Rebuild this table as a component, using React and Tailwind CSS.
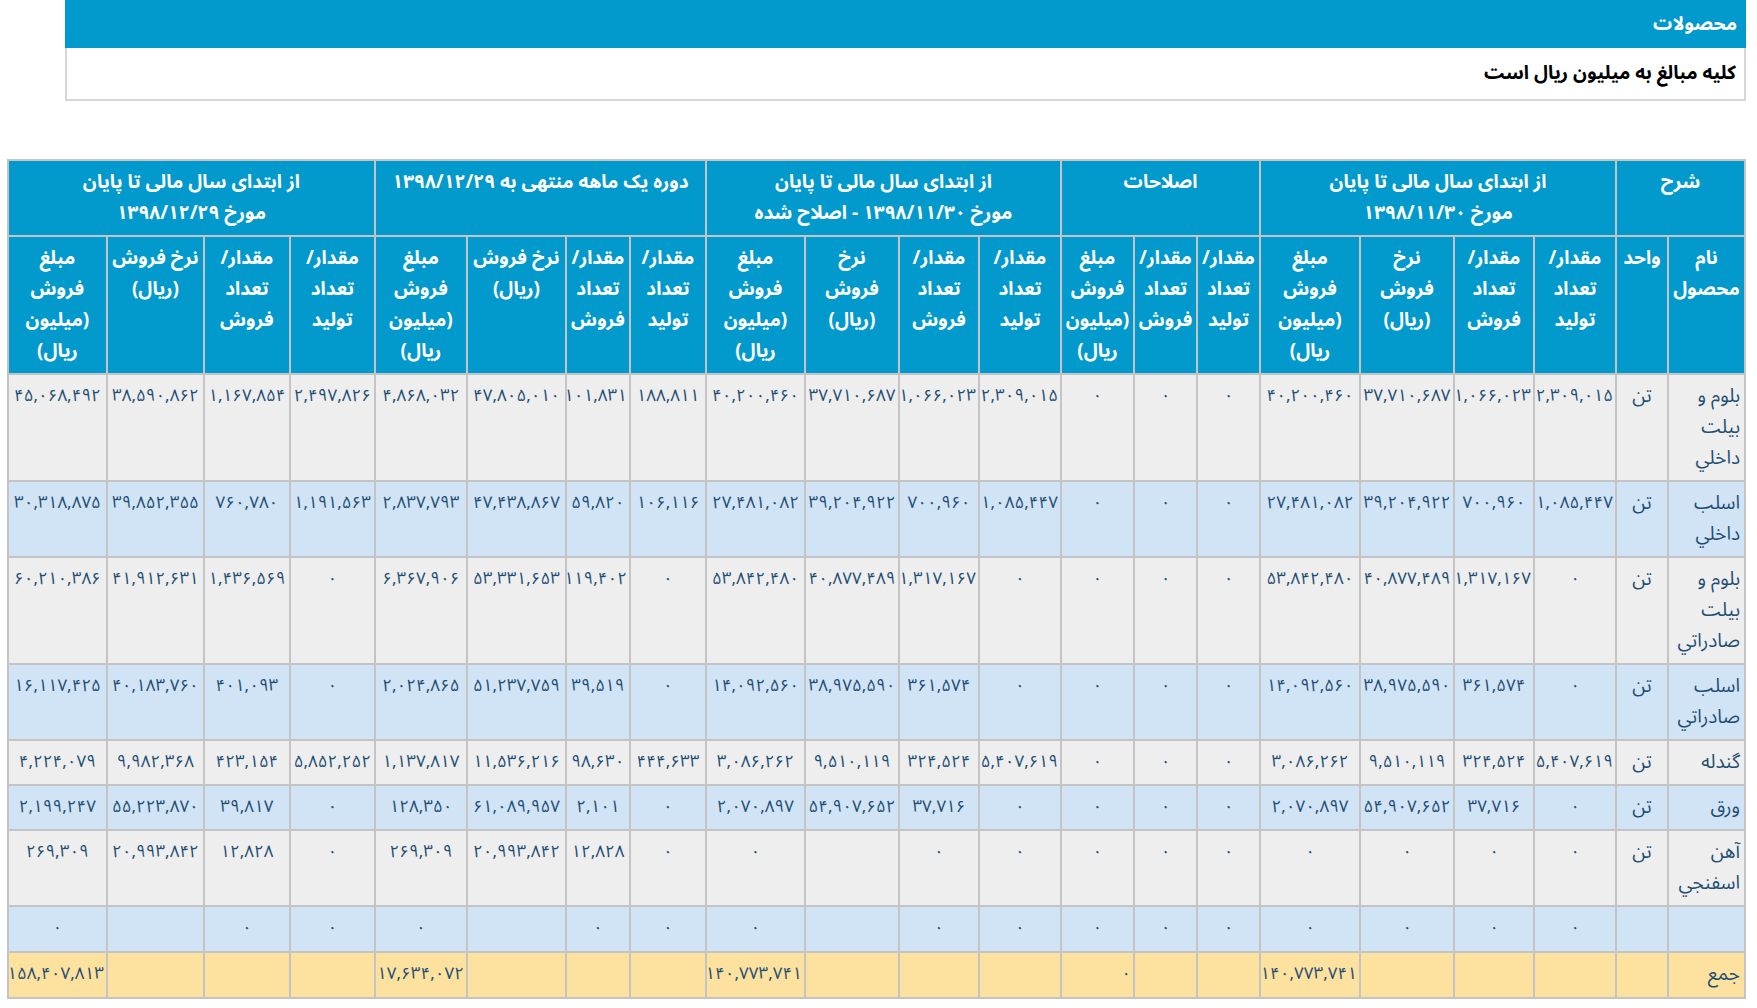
import React from "react";

const FONT = { fontFamily: '"Noto Sans Arabic", "DejaVu Sans", sans-serif' };

const widths = [77, 52, 82, 80, 94, 100, 63, 63, 73, 82, 80, 94, 99, 76, 64, 99, 92, 85, 86, 97, 99];

const Z = "۰";

const rows = [
  {
    name: ["بلوم و", "بیلت", "داخلي"],
    unit: "تن",
    bg: "bg-[#eeeeee]",
    v: ["۲,۳۰۹,۰۱۵", "۱,۰۶۶,۰۲۳", "۳۷,۷۱۰,۶۸۷", "۴۰,۲۰۰,۴۶۰", Z, Z, Z, "۲,۳۰۹,۰۱۵", "۱,۰۶۶,۰۲۳", "۳۷,۷۱۰,۶۸۷", "۴۰,۲۰۰,۴۶۰", "۱۸۸,۸۱۱", "۱۰۱,۸۳۱", "۴۷,۸۰۵,۰۱۰", "۴,۸۶۸,۰۳۲", "۲,۴۹۷,۸۲۶", "۱,۱۶۷,۸۵۴", "۳۸,۵۹۰,۸۶۲", "۴۵,۰۶۸,۴۹۲"],
  },
  {
    name: ["اسلب", "داخلي"],
    unit: "تن",
    bg: "bg-[#d1e4f5]",
    v: ["۱,۰۸۵,۴۴۷", "۷۰۰,۹۶۰", "۳۹,۲۰۴,۹۲۲", "۲۷,۴۸۱,۰۸۲", Z, Z, Z, "۱,۰۸۵,۴۴۷", "۷۰۰,۹۶۰", "۳۹,۲۰۴,۹۲۲", "۲۷,۴۸۱,۰۸۲", "۱۰۶,۱۱۶", "۵۹,۸۲۰", "۴۷,۴۳۸,۸۶۷", "۲,۸۳۷,۷۹۳", "۱,۱۹۱,۵۶۳", "۷۶۰,۷۸۰", "۳۹,۸۵۲,۳۵۵", "۳۰,۳۱۸,۸۷۵"],
  },
  {
    name: ["بلوم و", "بیلت", "صادراتي"],
    unit: "تن",
    bg: "bg-[#eeeeee]",
    v: [Z, "۱,۳۱۷,۱۶۷", "۴۰,۸۷۷,۴۸۹", "۵۳,۸۴۲,۴۸۰", Z, Z, Z, Z, "۱,۳۱۷,۱۶۷", "۴۰,۸۷۷,۴۸۹", "۵۳,۸۴۲,۴۸۰", Z, "۱۱۹,۴۰۲", "۵۳,۳۳۱,۶۵۳", "۶,۳۶۷,۹۰۶", Z, "۱,۴۳۶,۵۶۹", "۴۱,۹۱۲,۶۳۱", "۶۰,۲۱۰,۳۸۶"],
  },
  {
    name: ["اسلب", "صادراتي"],
    unit: "تن",
    bg: "bg-[#d1e4f5]",
    v: [Z, "۳۶۱,۵۷۴", "۳۸,۹۷۵,۵۹۰", "۱۴,۰۹۲,۵۶۰", Z, Z, Z, Z, "۳۶۱,۵۷۴", "۳۸,۹۷۵,۵۹۰", "۱۴,۰۹۲,۵۶۰", Z, "۳۹,۵۱۹", "۵۱,۲۳۷,۷۵۹", "۲,۰۲۴,۸۶۵", Z, "۴۰۱,۰۹۳", "۴۰,۱۸۳,۷۶۰", "۱۶,۱۱۷,۴۲۵"],
  },
  {
    name: ["گندله"],
    unit: "تن",
    bg: "bg-[#eeeeee]",
    v: ["۵,۴۰۷,۶۱۹", "۳۲۴,۵۲۴", "۹,۵۱۰,۱۱۹", "۳,۰۸۶,۲۶۲", Z, Z, Z, "۵,۴۰۷,۶۱۹", "۳۲۴,۵۲۴", "۹,۵۱۰,۱۱۹", "۳,۰۸۶,۲۶۲", "۴۴۴,۶۳۳", "۹۸,۶۳۰", "۱۱,۵۳۶,۲۱۶", "۱,۱۳۷,۸۱۷", "۵,۸۵۲,۲۵۲", "۴۲۳,۱۵۴", "۹,۹۸۲,۳۶۸", "۴,۲۲۴,۰۷۹"],
  },
  {
    name: ["ورق"],
    unit: "تن",
    bg: "bg-[#d1e4f5]",
    v: [Z, "۳۷,۷۱۶", "۵۴,۹۰۷,۶۵۲", "۲,۰۷۰,۸۹۷", Z, Z, Z, Z, "۳۷,۷۱۶", "۵۴,۹۰۷,۶۵۲", "۲,۰۷۰,۸۹۷", Z, "۲,۱۰۱", "۶۱,۰۸۹,۹۵۷", "۱۲۸,۳۵۰", Z, "۳۹,۸۱۷", "۵۵,۲۲۳,۸۷۰", "۲,۱۹۹,۲۴۷"],
  },
  {
    name: ["آهن", "اسفنجي"],
    unit: "تن",
    bg: "bg-[#eeeeee]",
    v: [Z, Z, Z, Z, Z, Z, Z, Z, Z, "", Z, Z, "۱۲,۸۲۸", "۲۰,۹۹۳,۸۴۲", "۲۶۹,۳۰۹", Z, "۱۲,۸۲۸", "۲۰,۹۹۳,۸۴۲", "۲۶۹,۳۰۹"],
  },
  {
    name: [],
    unit: "",
    bg: "bg-[#d1e4f5] h-[46px]",
    v: [Z, Z, Z, Z, Z, Z, Z, Z, Z, "", Z, Z, Z, "", Z, Z, Z, "", Z],
  },
];

const total = ["", "", "", "۱۴۰,۷۷۳,۷۴۱", "", "", Z, "", "", "", "۱۴۰,۷۷۳,۷۴۱", "", "", "", "۱۷,۶۳۴,۰۷۲", "", "", "", "۱۵۸,۴۰۷,۸۱۳"];

const thBase =
  "border-2 border-[#c4c4c4] bg-[#0299cc] text-white font-bold align-top text-center px-[2px] py-[6px] leading-[31px] text-[19px]";
const tdBase =
  "border-2 border-[#c4c4c4] align-top text-center px-[2px] py-[6px] leading-[31px] text-[17px] text-[#1f4e74]";
const tdText =
  "border-2 border-[#c4c4c4] align-top px-[2px] py-[6px] leading-[31px] text-[19px] text-[#1f4e74]";

function Lines({ lines }) {
  return lines.map((l, i) => (
    <React.Fragment key={i}>
      {i > 0 && <br />}
      {l}
    </React.Fragment>
  ));
}

const prod = ["مقدار/", "تعداد", "تولید"];
const sale = ["مقدار/", "تعداد", "فروش"];
const rate3 = ["نرخ", "فروش", "(ریال)"];
const rate2 = ["نرخ فروش", "(ریال)"];
const amount = ["مبلغ", "فروش", "(میلیون", "ریال)"];

const sub = [
  ["نام", "محصول"],
  ["واحد"],
  prod, sale, rate3, amount,
  prod, sale, amount,
  prod, sale, rate3, amount,
  prod, sale, rate2, amount,
  prod, sale, rate2, amount,
];

export default function App() {
  return (
    <div dir="rtl" style={FONT} className="w-[1757px] min-h-[1008px] bg-white">
      <div className="mr-[11px] ml-[65px]">
        <div className="h-[48px] bg-[#0299cc] text-white font-bold text-[19px] flex items-center pr-[9px]">
          محصولات
        </div>
        <div className="h-[53px] border-2 border-[#d6d6d6] border-t-0 bg-white text-black font-bold text-[19px] flex items-center pr-[8px]">
          کلیه مبالغ به میلیون ریال است
        </div>
      </div>
      <div className="mr-[11px] ml-[9px] mt-[58px]">
        <table className="table-fixed border-collapse w-[1737px]">
          <colgroup>
            {widths.map((w, i) => (
              <col key={i} style={{ width: w }} />
            ))}
          </colgroup>
          <thead>
            <tr>
              <th colSpan={2} className={thBase}>شرح</th>
              <th colSpan={4} className={thBase}>
                <Lines lines={["از ابتدای سال مالی تا پایان", "مورخ ۱۳۹۸/۱۱/۳۰"]} />
              </th>
              <th colSpan={3} className={thBase}>اصلاحات</th>
              <th colSpan={4} className={thBase}>
                <Lines lines={["از ابتدای سال مالی تا پایان", "مورخ ۱۳۹۸/۱۱/۳۰ - اصلاح شده"]} />
              </th>
              <th colSpan={4} className={thBase}>دوره یک ماهه منتهی به ۱۳۹۸/۱۲/۲۹</th>
              <th colSpan={4} className={thBase}>
                <Lines lines={["از ابتدای سال مالی تا پایان", "مورخ ۱۳۹۸/۱۲/۲۹"]} />
              </th>
            </tr>
            <tr>
              {sub.map((s, i) => (
                <th key={i} className={thBase}>
                  <Lines lines={s} />
                </th>
              ))}
            </tr>
          </thead>
          <tbody>
            {rows.map((r, ri) => (
              <tr key={ri} className={r.bg}>
                <td className={tdText + " text-right pr-[4px]"}>
                  <Lines lines={r.name} />
                </td>
                <td className={tdText + " text-center"}>{r.unit}</td>
                {r.v.map((v, vi) => (
                  <td key={vi} className={tdBase}>
                    {v}
                  </td>
                ))}
              </tr>
            ))}
            <tr className="bg-[#fde19e] h-[46px]">
              <td className={tdText + " text-right pr-[4px]"}>جمع</td>
              <td className={tdBase}></td>
              {total.map((v, vi) => (
                <td key={vi} className={tdBase + " !text-right"}>
                  {v}
                </td>
              ))}
            </tr>
          </tbody>
        </table>
      </div>
    </div>
  );
}
